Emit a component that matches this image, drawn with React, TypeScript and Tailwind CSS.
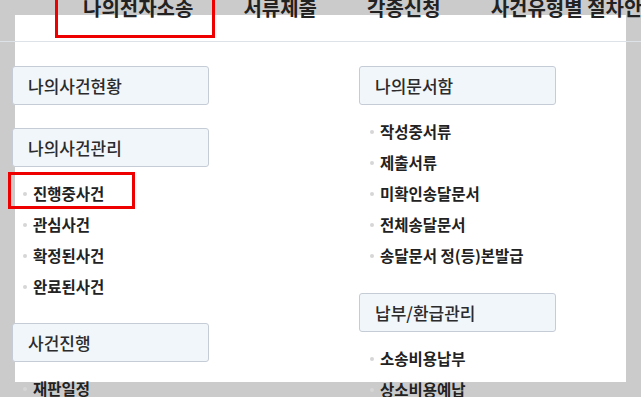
import React from "react";

const navItems = [
  { label: "나의전자소송", x: "ml-[83px]" },
  { label: "서류제출", x: "ml-[50px]" },
  { label: "각종신청", x: "ml-[50px]" },
  { label: "사건유형별 절차안내", x: "ml-[50px]" },
];

function SectionBox({ title }: { title: string }) {
  return (
    <div className="h-[39px] w-[197px] rounded-[3px] border border-[#c6ccd6] bg-[#f1f6fb] pl-[15px] flex items-center text-[17px] font-medium text-[#2b2b2b]">
      {title}
    </div>
  );
}

function Items({ items }: { items: string[] }) {
  return (
    <ul className="mt-[11px]">
      {items.map((item) => (
        <li key={item} className="h-[31px] flex items-center pl-[11px] text-[15.5px] font-semibold text-[#222222]">
          <span className="mr-[6px] h-[4px] w-[4px] rounded-full bg-[#d6d6d6]" />
          {item}
        </li>
      ))}
    </ul>
  );
}

export default function App() {
  return (
    <div
      className="relative h-[397px] w-[641px] overflow-hidden bg-[#cbcbcb]"
      style={{ fontFamily: '"Noto Sans CJK KR", "Noto Sans", sans-serif' }}
    >
      {/* 강조 영역 */}
      <div className="absolute left-[15px] top-[15px] h-[367px] w-[611px] bg-white" />

      <div className="relative">
        <nav className="flex h-[42px] border-b border-[#dde1e8]">
          {navItems.map((n) => (
            <div
              key={n.label}
              className={`${n.x} shrink-0 whitespace-nowrap text-[20px] font-bold leading-[20px] text-[#222222] -mt-[2px]`}
            >
              {n.label}
            </div>
          ))}
        </nav>

        <div className="flex pt-[24px] pl-[12px]">
          <div className="w-[197px]">
            <SectionBox title="나의사건현황" />
            <div className="mt-[23px]">
              <SectionBox title="나의사건관리" />
              <Items items={["진행중사건", "관심사건", "확정된사건", "완료된사건"]} />
            </div>
            <div className="mt-[21px]">
              <SectionBox title="사건진행" />
              <Items items={["재판일정"]} />
            </div>
          </div>

          <div className="ml-[150px] w-[198px]">
            <SectionBox title="나의문서함" />
            <Items items={["작성중서류", "제출서류", "미확인송달문서", "전체송달문서", "송달문서 정(등)본발급"]} />
            <div className="mt-[22px]">
              <SectionBox title="납부/환급관리" />
              <Items items={["소송비용납부", "상소비용예납"]} />
            </div>
          </div>
        </div>
      </div>

      {/* 빨간 표시 박스 */}
      <div className="absolute left-[55px] top-[-6px] h-[44px] w-[160px] border-[3px] border-[#ee0000]" />
      <div className="absolute left-[8px] top-[172px] h-[37px] w-[127px] border-[3px] border-[#ee0000]" />
    </div>
  );
}
